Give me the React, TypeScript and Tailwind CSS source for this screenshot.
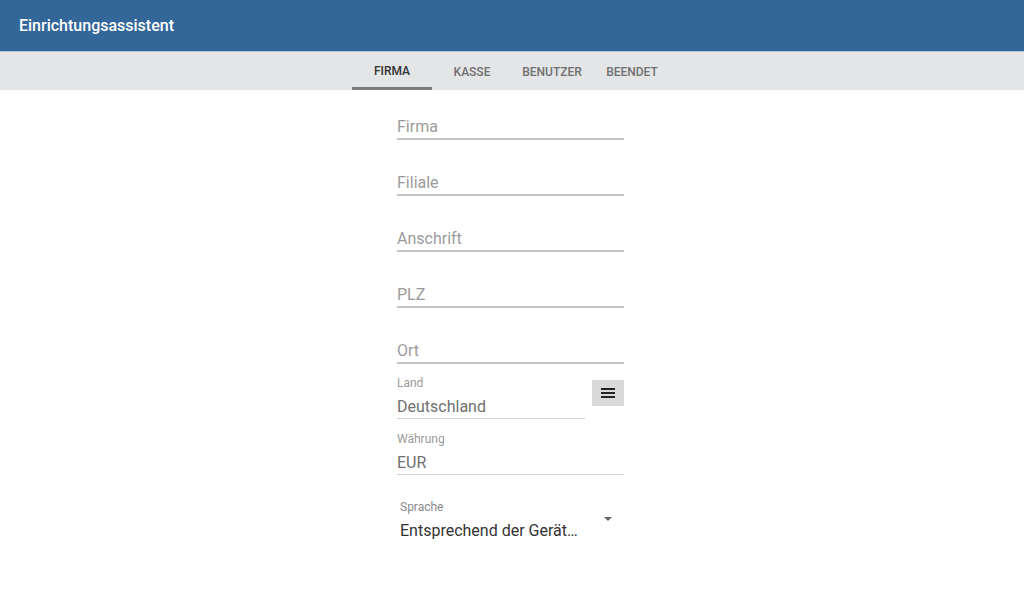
import React from "react";

function Field({ label }: { label: string }) {
  return (
    <div className="h-[56px] flex flex-col justify-end">
      <div className="text-[16px] leading-[19px] text-[#9b9b9b] pb-[2px]">{label}</div>
      <div className="h-[2px] bg-[#c2c2c2]" />
    </div>
  );
}

export default function App() {
  return (
    <div className="w-[1024px] h-[598px] bg-white overflow-hidden" style={{ fontFamily: "Roboto, 'Liberation Sans', sans-serif" }}>
      <header className="h-[51px] bg-[#336699] flex items-center px-[19px]">
        <span className="text-white text-[16px] font-medium">Einrichtungsassistent</span>
      </header>
      <div className="h-[1px] bg-[#b8c6d4]" />
      <nav className="h-[38px] bg-[#e3e5e6] flex justify-center">
        <div className="flex">
          <div className="w-[80px] flex flex-col">
            <div className="flex-1 flex items-center justify-center pt-[3px] text-[12px] font-medium text-[#333]">FIRMA</div>
            <div className="h-[3px] bg-[#7a7a7a]" />
          </div>
          <div className="w-[80px] flex items-center justify-center pt-[1px] text-[12px] font-medium text-[#707070]">KASSE</div>
          <div className="w-[80px] flex items-center justify-center pt-[1px] text-[12px] font-medium text-[#707070]">BENUTZER</div>
          <div className="w-[80px] flex items-center justify-center pt-[1px] text-[12px] font-medium text-[#707070]">BEENDET</div>
        </div>
      </nav>
      <main className="flex justify-center">
        <div className="w-[227px] ml-[-3px] mt-[-6px]">
          <Field label="Firma" />
          <Field label="Filiale" />
          <Field label="Anschrift" />
          <Field label="PLZ" />
          <Field label="Ort" />
          <div className="flex items-start gap-[7px] mt-[12px]">
            <div className="w-[188px]">
              <div className="text-[12px] leading-[14px] text-[#9b9b9b]">Land</div>
              <div className="text-[16px] leading-[19px] text-[#707070] mt-[7px] pb-[2px]">Deutschland</div>
              <div className="h-[1px] bg-[#d0d0d0]" />
            </div>
            <button className="w-[32px] h-[26px] mt-[4px] bg-[#d9d9d9] flex items-center justify-center">
              <svg width="14" height="10" viewBox="0 0 14 10">
                <rect x="0" y="0" width="14" height="2" fill="#222" />
                <rect x="0" y="4" width="14" height="2" fill="#222" />
                <rect x="0" y="8" width="14" height="2" fill="#222" />
              </svg>
            </button>
          </div>
          <div className="mt-[13px]">
            <div className="text-[12px] leading-[14px] text-[#9b9b9b]">Währung</div>
            <div className="text-[16px] leading-[19px] text-[#707070] mt-[7px] pb-[2px]">EUR</div>
            <div className="h-[1px] bg-[#d0d0d0]" />
          </div>
          <div className="mt-[25px] pl-[3px] flex items-start">
            <div className="w-[200px]">
              <div className="text-[12px] leading-[14px] text-[#8a8a8a]">Sprache</div>
              <div className="text-[16px] leading-[19px] text-[#333] mt-[7px] whitespace-nowrap">Entsprechend der Gerät…</div>
            </div>
            <svg className="ml-[4px] mt-[17px]" width="8" height="4" viewBox="0 0 8 4">
              <polygon points="0,0 8,0 4,4" fill="#666" />
            </svg>
          </div>
        </div>
      </main>
    </div>
  );
}
